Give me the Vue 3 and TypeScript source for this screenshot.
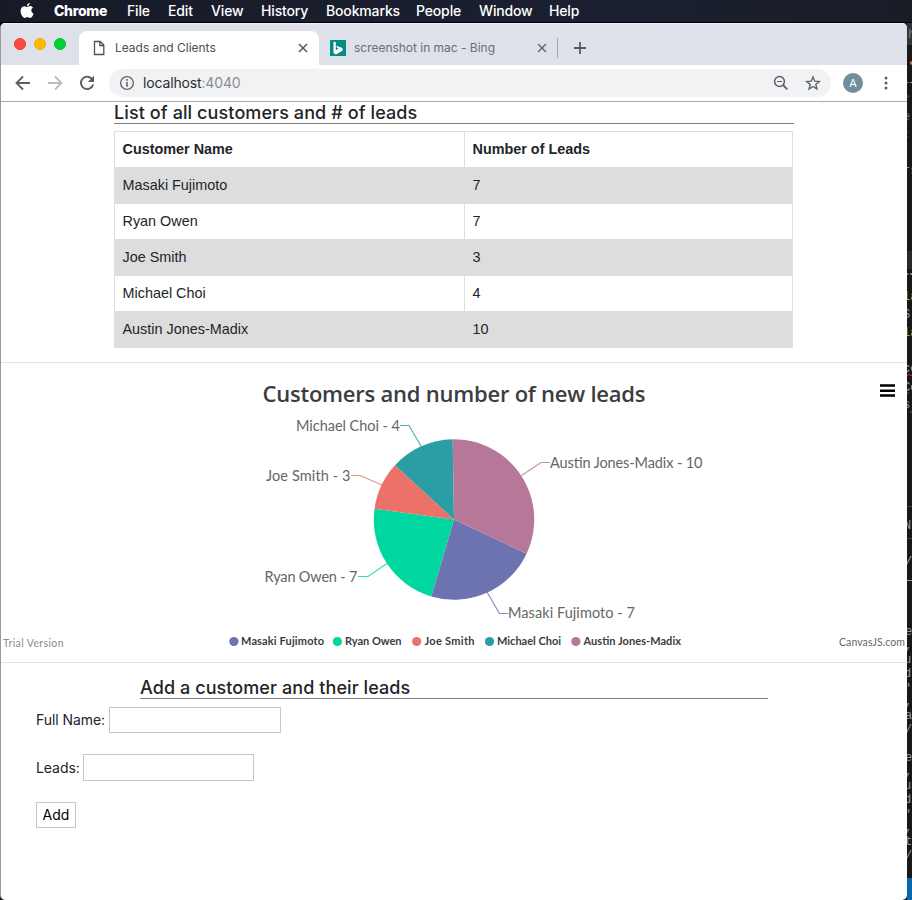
<script setup lang="ts">
interface Lead {
  name: string
  leads: number
  color: string
  line: string
  labelX: number
  labelY: number
  labelWidth: number
  dotX: number
  legendX: number
  legendWidth: number
}

const menus = ['File', 'Edit', 'View', 'History', 'Bookmarks', 'People', 'Window', 'Help']

const customers: Lead[] = [
  { name: 'Masaki Fujimoto', leads: 7, color: '#6d72b0', line: '487,592 499.5,613.5 508.5,613.5', labelX: 508, labelY: 618, labelWidth: 127, dotX: 233.9, legendX: 241, legendWidth: 83 },
  { name: 'Ryan Owen', leads: 7, color: '#00d6a0', line: '387,563.5 368,576.5 358,576.5', labelX: 264.5, labelY: 581.5, labelWidth: 93, dotX: 337.4, legendX: 345, legendWidth: 56.5 },
  { name: 'Joe Smith', leads: 3, color: '#eb7169', line: '382,485 360,475.5 351,475.5', labelX: 266, labelY: 480.5, labelWidth: 84.5, dotX: 416.7, legendX: 424.5, legendWidth: 50 },
  { name: 'Michael Choi', leads: 4, color: '#2b9da4', line: '421,446 409,425.5 400,425.5', labelX: 296, labelY: 430.5, labelWidth: 104, dotX: 489.5, legendX: 497, legendWidth: 64 },
  { name: 'Austin Jones-Madix', leads: 10, color: '#b67798', line: '521.5,475.5 541,462.5 550,462.5', labelX: 550, labelY: 467.5, labelWidth: 152.5, dotX: 575.9, legendX: 583.5, legendWidth: 97.5 },
]

const cx = 454
const cy = 519.5
const radius = 80.2
const total = customers.reduce((sum, c) => sum + c.leads, 0)

function point(deg: number): string {
  const a = (deg * Math.PI) / 180
  return `${(cx + radius * Math.sin(a)).toFixed(2)},${(cy - radius * Math.cos(a)).toFixed(2)}`
}

let angle = 115.2
const slices = customers.map((c) => {
  const from = angle
  angle += (c.leads / total) * 360
  return { color: c.color, d: `M${cx},${cy}L${point(from)}A${radius},${radius} 0 0 1 ${point(angle)}Z` }
})

const codeBits = [
  { t: 'h', x: 1, y: 38, c: '#777' },
  { t: 'e', x: -4, y: 120, c: '#8560b5' },
  { t: 'c', x: -5, y: 138, c: '#3b3b70' }, { t: 'rs', x: -4, y: 174, c: '#9b9e62' },
  { t: 'la', x: -4, y: 300, c: '#a6a85c' },
  { t: 'S:', x: -4, y: 318, c: '#999' }, { t: 'la', x: -4, y: 336, c: '#a6a85c' },
  { t: 'ce', x: -4, y: 372, c: '#aaa' }, { t: 'Ce', x: -4, y: 391, c: '#aaa' },
  { t: 's.', x: -4, y: 408, c: '#999' }, { t: 'N', x: -3, y: 529, c: '#999' },
  { t: '/', x: -2, y: 565, c: '#aaa' }, { t: 'e', x: -2, y: 635, c: '#999' },
  { t: ',', x: -2, y: 649, c: '#999' }, { t: 'u', x: -3, y: 663, c: '#999' },
  { t: 'd', x: -3, y: 677, c: '#999' }, { t: '\'', x: -2, y: 692, c: '#999' },
  { t: ',', x: -2, y: 705, c: '#999' }, { t: 'a', x: -2, y: 719, c: '#999' },
  { t: '/', x: -2, y: 733, c: '#999' }, { t: 'e', x: -2, y: 761, c: '#999' },
  { t: ',', x: -2, y: 775, c: '#999' }, { t: 'u', x: -3, y: 789, c: '#999' },
  { t: 'd', x: -3, y: 803, c: '#999' }, { t: '\'', x: -2, y: 818, c: '#999' },
  { t: ',', x: -2, y: 831, c: '#999' }, { t: 't', x: -2, y: 845, c: '#999' },
  { t: '/', x: -2, y: 859, c: '#999' },
]
</script>

<template>
  <div class="desktop">
    <header class="menubar">
      <svg class="apple" width="14" height="18" viewBox="0 0 14 18">
        <path fill="#fff" d="M9.8 1.100c-.1 1.700-1.300 3-2.900 3.100C6.800 2.500 8.200 1.200 9.800 1.100ZM7.100 5c.7 0 1.500-.9 3-.9 1.200 0 2.200.6 2.900 1.500-2.500 1.500-2.100 5 .6 6.100-.6 1.700-1.900 4.200-3.400 4.200-1 0-1.500-.6-2.800-.6s-1.800.6-2.700.6C2.900 15.900.6 12 .6 8.900c0-3 1.900-4.700 3.900-4.700 1.200 0 2 .8 2.600.8Z" />
      </svg>
      <strong>Chrome</strong>
      <span v-for="m in menus" :key="m">{{ m }}</span>
    </header>

    <div class="stage">
      <div class="window">
        <div class="tabstrip">
          <div class="lights"><i class="red"></i><i class="amber"></i><i class="green"></i></div>
          <div class="tab active">
            <svg width="12" height="16" viewBox="0 0 12 16" fill="none" stroke="#4d5054" stroke-width="1.300">
              <path d="M1.500 1.500h5.700l3.600 3.600v9.400H1.500ZM6.800 1.500v4h4" />
            </svg>
            <span class="tab-title">Leads and Clients</span>
            <svg class="close" width="10" height="10" viewBox="0 0 10 10" stroke="#55585d" stroke-width="1.500"><path d="M1 1l8 8M9 1l-8 8" /></svg>
          </div>
          <div class="tab idle">
            <svg width="16" height="16" viewBox="0 0 16 16">
              <rect width="16" height="16" fill="#058a84" />
              <path fill="#fff" d="M3.500 1.500l2.300.8v8l2.800-1.500-1.400-.8-.9-2.200 6.200 2.300v2.600L5.900 14.400l-2.400-1.500Z" />
            </svg>
            <span class="tab-title">screenshot in mac - Bing</span>
            <svg class="close" width="10" height="10" viewBox="0 0 10 10" stroke="#66696e" stroke-width="1.500"><path d="M1 1l8 8M9 1l-8 8" /></svg>
          </div>
          <i class="divider"></i>
          <svg class="plus" width="12" height="12" viewBox="0 0 12 12" stroke="#55595f" stroke-width="1.800"><path d="M0 6h12M6 0v12" /></svg>
        </div>

        <div class="toolbar">
          <svg class="nav" width="16" height="16" viewBox="0 0 16 16" fill="none" stroke="#5b5f64" stroke-width="1.800"><path d="M15 8H2M8 1.500L1.500 8 8 14.500" /></svg>
          <svg class="nav" width="16" height="16" viewBox="0 0 16 16" fill="none" stroke="#b9bbbe" stroke-width="1.800"><path d="M1 8h13M8 1.500L14.500 8 8 14.500" /></svg>
          <svg class="nav" width="16" height="16" viewBox="0 0 16 16"><path d="M13.400 4.600A6.200 6.200 0 1 0 14.100 9.500" fill="none" stroke="#5b5f64" stroke-width="1.900" /><path d="M15 .8v6.100H8.900Z" fill="#5b5f64" /></svg>
          <div class="omnibox">
            <svg width="16" height="16" viewBox="0 0 16 16"><circle cx="8" cy="8" r="6.400" fill="none" stroke="#65696e" stroke-width="1.400" /><path d="M8 4v1.700M8 7v4.800" stroke="#65696e" stroke-width="1.700" /></svg>
            <span class="url">localhost<em>:4040</em></span>
            <svg class="lens" width="16" height="16" viewBox="0 0 16 16" fill="none" stroke="#5e6267"><circle cx="6.500" cy="6.500" r="4.900" stroke-width="1.500" /><path d="M10 10l4.300 4.300" stroke-width="1.800" /><path d="M4 6.500h5" stroke-width="1.200" /></svg>
            <svg width="16" height="16" viewBox="0 0 16 16" fill="none" stroke="#5e6267" stroke-width="1.400"><path d="M8 1.900l1.700 4.300 4.600.3-3.500 3 1.100 4.500L8 11.500 4.100 14l1.100-4.500-3.500-3 4.600-.3Z" /></svg>
          </div>
          <div class="avatar">A</div>
          <svg class="more" width="4" height="14" viewBox="0 0 4 14" fill="#5b5f64"><circle cx="2" cy="2" r="1.500" /><circle cx="2" cy="7" r="1.500" /><circle cx="2" cy="12" r="1.500" /></svg>
        </div>

        <main>
          <section class="customers">
            <h2>List of all customers and # of leads</h2>
            <table>
              <thead><tr><th class="name">Customer Name</th><th>Number of Leads</th></tr></thead>
              <tbody><tr v-for="c in customers" :key="c.name"><td>{{ c.name }}</td><td>{{ c.leads }}</td></tr></tbody>
            </table>
          </section>

          <svg class="chart" width="906" height="299" viewBox="1 363 906 299">
            <text class="title" x="262.500" y="402" textLength="383">Customers and number of new leads</text>
            <path d="M880 385.500h15M880 390.700h15M880 395.500h15" stroke="#000" stroke-width="2.600" />
            <path v-for="s in slices" :key="s.d" :d="s.d" :fill="s.color" />
            <g v-for="c in customers" :key="c.name">
              <polyline :points="c.line" fill="none" :stroke="c.color" stroke-width="1.200" stroke-opacity=".8" />
              <text class="label" :x="c.labelX" :y="c.labelY" :textLength="c.labelWidth">{{ c.name }} - {{ c.leads }}</text>
              <circle :cx="c.dotX" cy="641.500" r="4.600" :fill="c.color" />
              <text class="legend" :x="c.legendX" y="645" :textLength="c.legendWidth">{{ c.name }}</text>
            </g>
            <text class="note" x="3" y="647" textLength="60.500" fill="#8c8c8c">Trial Version</text>
            <text class="note" x="839" y="646" textLength="66" fill="#666">CanvasJS.com</text>
          </svg>

          <section class="add">
            <h2>Add a customer and their leads</h2>
            <form @submit.prevent>
              <label class="full">Full Name:<input type="text" /></label>
              <label class="leads">Leads:<input type="text" /></label>
              <button>Add</button>
            </form>
          </section>
        </main>
      </div>

      <svg class="editor" width="5" height="877" viewBox="0 23 5 877">
        <rect y="23" width="5" height="877" fill="#181818" />
        <rect y="23" width="5" height="22" fill="#343434" />
        <rect y="251" width="5" height="18" fill="#292929" />
        <circle cx="4.500" cy="63" r="1.800" fill="#c4733b" />
        <path d="M0 82.500h1.500M3 82.500h2" stroke="#999" />
        <path d="M0 96h2l-1 2" stroke="#345a80" fill="none" />
        <path d="M0 274h1.500M3 274h2" stroke="#a6a85c" stroke-width="1.500" />
        <path d="M0 506.500h5M0 538.500h5" stroke="#444" />
        <path d="M0 580.500h5" stroke="#999" />
        <text v-for="b in codeBits" :key="b.y" class="code" :x="b.x" :y="b.y" :fill="b.c">{{ b.t }}</text>
        <path d="M0 376l2-2 2 2 1-1M0 392l2 2M3 411l2 2" stroke="#b8373b" fill="none" />
        <rect y="878" width="5" height="22" fill="#0767b1" />
      </svg>
    </div>
  </div>
</template>

<style>
body { margin: 0; overflow: hidden; }
</style>

<style scoped>
* { box-sizing: border-box; }
.desktop { width: 912px; height: 900px; background: #11141d; font-family: Inter, "Liberation Sans", sans-serif; overflow: hidden; }
.menubar { height: 23px; padding-left: 20px; display: grid; grid-template-columns: 34px 73px 41px 43px 50px 65px 90px 63px 70px 40px; align-items: center; background: linear-gradient(90deg, #171b28, #1b2031 65%, #191d26); border-bottom: 1px solid #000; color: #fff; font-size: 14px; font-weight: 500; line-height: 22px; white-space: nowrap; letter-spacing: -.15px; }
.menubar strong { font-weight: 800; letter-spacing: -.3px; }
.stage { display: flex; height: 877px; background: linear-gradient(90deg, #11141d 50%, #181818 50%); }
.window { width: 907px; height: 877px; background: #fff; border-left: 1px solid #999; border-radius: 5px; overflow: hidden; }
.tabstrip { height: 42px; display: flex; align-items: flex-end; background: #dee1e9; border-top: 1px solid #eef0f4; }
.lights { width: 78px; height: 41px; padding: 14px 0 0 13px; display: flex; gap: 8px; }
.lights i { width: 12px; height: 12px; border-radius: 50%; }
.red { background: #ff4a42; border: 1px solid #ec3831; }
.amber { background: #ffb900; border: 1px solid #eda800; }
.green { background: #00d12e; border: 1px solid #00bf26; }
.tab { display: flex; align-items: center; font-size: 12px; }
.tab-title { padding-bottom: 1px; letter-spacing: -.02px; }
.active { width: 240px; height: 34px; padding: 0 11px 0 14px; background: #fff; border-radius: 8px 8px 0 0; color: #4b4e52; }
.active .tab-title { margin-left: 10px; }
.close { margin-left: auto; }
.idle { width: 238px; height: 34px; padding: 0 10px 0 11px; color: #6a6e75; }
.idle .tab-title { margin-left: 8px; }
.divider { width: 1px; height: 20px; margin-bottom: 7px; background: #a0a3a9; }
.plus { margin: 0 0 11px 16px; }
.toolbar { height: 37px; padding-left: 14px; display: flex; align-items: center; border-bottom: 1px solid #ababab; background: #fff; }
.nav { margin-right: 16px; flex: none; }
.omnibox { width: 722px; height: 28px; margin-left: -2px; padding: 0 10px; display: flex; align-items: center; background: #f1f2f4; border-radius: 14px; flex: none; }
.url { margin: 0 auto 0 8px; padding-bottom: 1px; font-size: 14px; letter-spacing: -.15px; color: #292c30; }
.url em { font-style: normal; color: #898d91; }
.lens { margin-right: 16px; }
.avatar { width: 20px; height: 20px; margin-left: 12px; border-radius: 50%; background: #708e9b; color: #fff; font-size: 11px; line-height: 20px; text-align: center; flex: none; }
.more { margin-left: 20.500px; }
main { background: #fff; color: #212529; }
h2 { margin: 0; border-bottom: 1px solid #808080; font-size: 18px; font-weight: 500; line-height: 21px; }
.customers { height: 261px; padding-left: 113px; border-bottom: 1px solid #e4e4e4; }
.customers h2 { width: 680px; height: 22px; margin-bottom: 7px; letter-spacing: .1px; }
table { width: 679px; table-layout: fixed; border-collapse: collapse; font: 14.4px/17px "Liberation Sans", Arial, sans-serif; }
th, td { height: 36px; padding: 0 7.500px; border: 1px solid #ddd; text-align: left; }
.name { width: 350px; }
tbody tr:nth-child(odd) { background: #ddd; }
.chart { display: block; font-family: "Trebuchet MS", Lato, sans-serif; }
.title { font-family: "Trebuchet MS", "Open Sans", sans-serif; font-size: 22px; font-weight: 600; fill: #3c3d3e; }
.label { font-size: 14.500px; fill: #666; }
.legend { font-size: 11px; font-weight: 700; fill: #3b3c3d; }
.note { font-family: Lato, "Noto Sans", sans-serif; font-size: 10.500px; }
.add { padding: 15px 0 0 35px; border-top: 1px solid #e4e4e4; }
.add h2 { width: 628px; height: 21px; margin-left: 104px; line-height: 20px; letter-spacing: .08px; }
form { display: flex; flex-direction: column; align-items: flex-start; padding-top: 8px; }
label { display: flex; align-items: center; gap: 4px; font-size: 14px; line-height: 16px; letter-spacing: -.06px; white-space: pre; }
input { height: 27px; border: 1px solid #c6c6c6; padding: 0 4px; background: #fff; }
.full input { width: 172px; height: 26px; }
.leads { margin-top: 21px; gap: 3px; }
.leads input { width: 171px; }
button { width: 40px; height: 26px; margin-top: 21px; padding: 0 0 1px; border: 1px solid #c6c6c6; background: #fff; color: #000; font: 14px Inter, sans-serif; }
.code { font: 12px "Liberation Mono", monospace; }
</style>
